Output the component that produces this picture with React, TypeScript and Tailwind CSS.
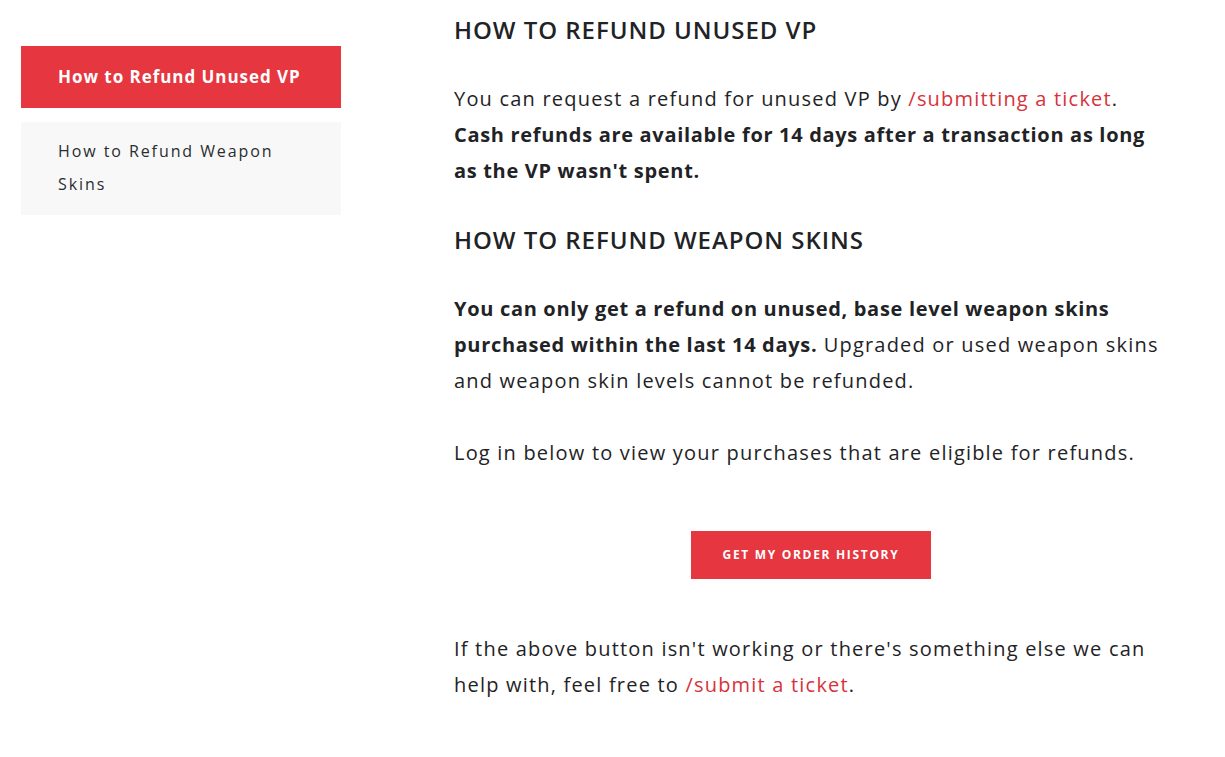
import React from "react";

export default function App() {
  const font = { fontFamily: "'Open Sans', 'Noto Sans', sans-serif" };
  return (
    <div className="w-[1225px] h-[757px] bg-white text-[#1f2326] overflow-hidden" style={font}>
      <div className="flex">
        <aside className="w-[320px] ml-[21px] mt-[46px] flex flex-col gap-[14px] shrink-0">
          <div className="h-[62px] bg-[#e6363f] flex items-center pl-[37px] text-white font-bold text-[17px] tracking-[0.056em]">
            How to Refund Unused VP
          </div>
          <div className="h-[93px] bg-[#f8f8f8] pl-[37px] pr-[40px] pt-[13px] text-[16px] leading-[33px] tracking-[0.12em] text-[#2a2d30]">
            How to Refund Weapon Skins
          </div>
        </aside>
        <main className="ml-[113px] w-[714px] pt-[13px] text-[20px] leading-[36px]">
          <h2 className="text-[24px] leading-[34px] font-semibold tracking-[0.04em]">HOW TO REFUND UNUSED VP</h2>
          <p className="mt-[34px] tracking-[0.06em]">
            You can request a refund for unused VP by{" "}
            <a className="text-[#d7333b]">/submitting a ticket</a>.{" "}
            <b className="font-bold tracking-[0.034em]">Cash refunds are available for 14 days after a transaction as long as the VP wasn't spent.</b>
          </p>
          <h2 className="mt-[34px] text-[24px] leading-[34px] font-semibold tracking-[0.04em]">HOW TO REFUND WEAPON SKINS</h2>
          <p className="mt-[34px] tracking-[0.06em]">
            <b className="font-bold tracking-[0.034em]">You can only get a refund on unused, base level weapon skins purchased within the last 14 days.</b>{" "}
            Upgraded or used weapon skins and weapon skin levels cannot be refunded.
          </p>
          <p className="mt-[36px] tracking-[0.06em]">Log in below to view your purchases that are eligible for refunds.</p>
          <div className="mt-[60px] flex justify-center">
            <button className="w-[240px] h-[48px] bg-[#e6363f] text-white text-[12px] font-bold tracking-[0.14em]">
              GET MY ORDER HISTORY
            </button>
          </div>
          <p className="mt-[52px] tracking-[0.06em]">
            If the above button isn't working or there's something else we can help with, feel free to{" "}
            <a className="text-[#d7333b]">/submit a ticket</a>.
          </p>
        </main>
      </div>
    </div>
  );
}
